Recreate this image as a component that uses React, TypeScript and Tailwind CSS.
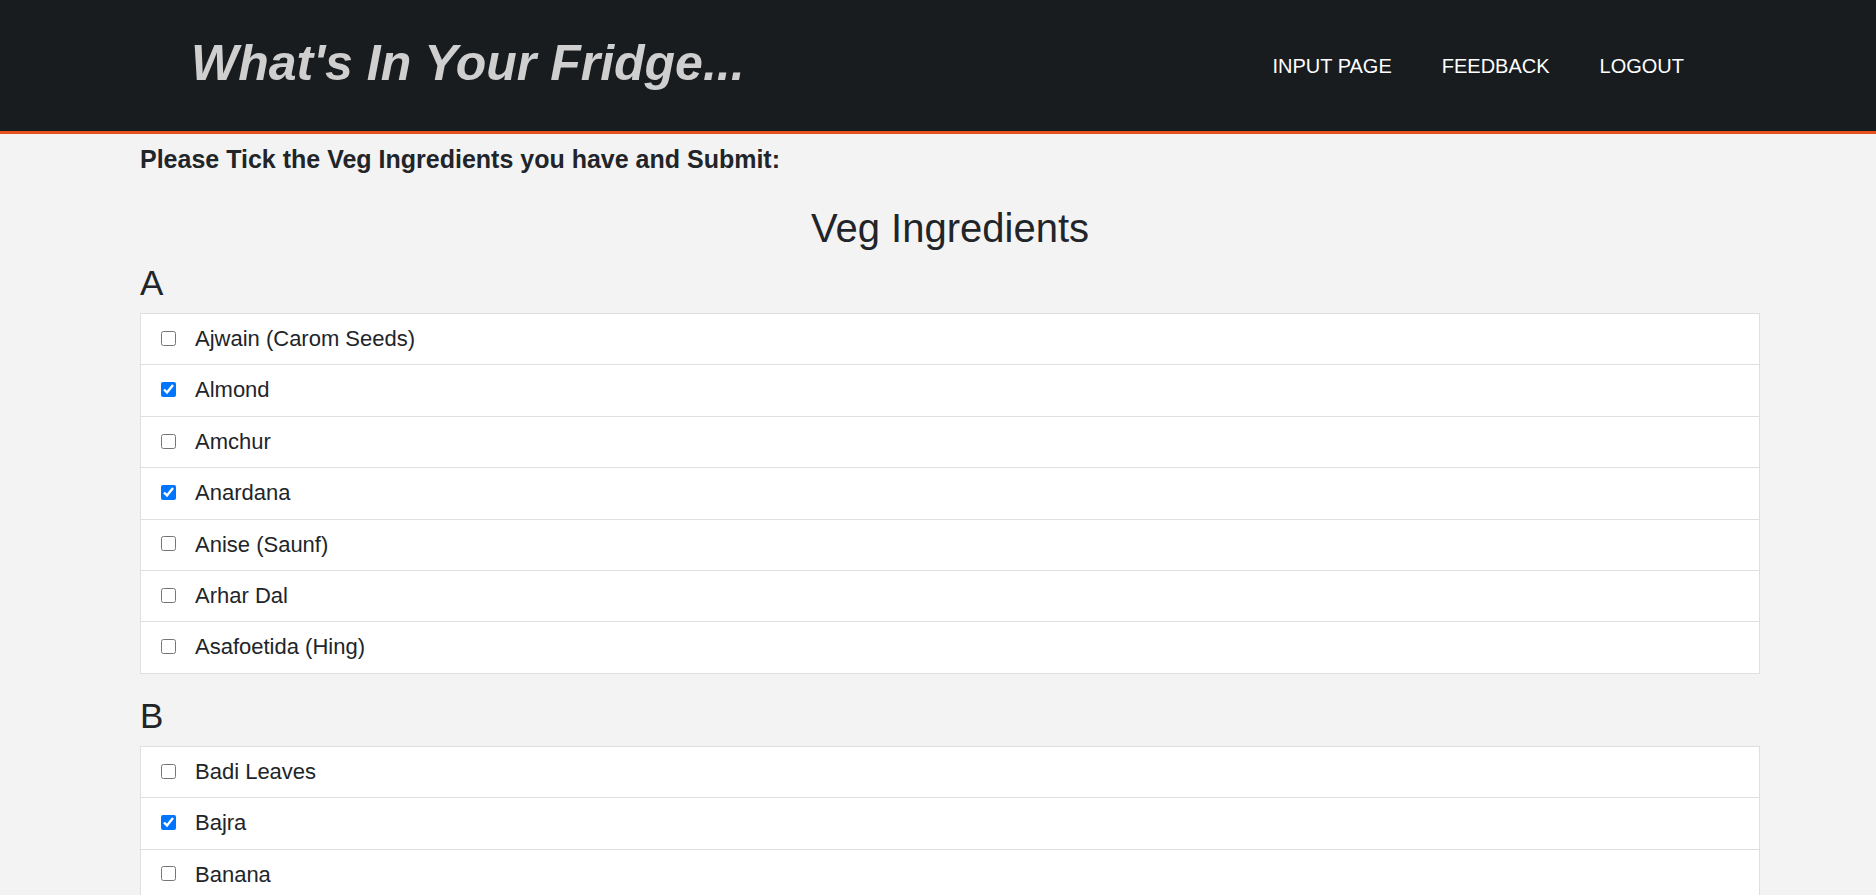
import React from "react";

type Item = { name: string; checked: boolean };

const sections: { letter: string; items: Item[] }[] = [
  {
    letter: "A",
    items: [
      { name: "Ajwain (Carom Seeds)", checked: false },
      { name: "Almond", checked: true },
      { name: "Amchur", checked: false },
      { name: "Anardana", checked: true },
      { name: "Anise (Saunf)", checked: false },
      { name: "Arhar Dal", checked: false },
      { name: "Asafoetida (Hing)", checked: false },
    ],
  },
  {
    letter: "B",
    items: [
      { name: "Badi Leaves", checked: false },
      { name: "Bajra", checked: true },
      { name: "Banana", checked: false },
      { name: "Basmati Rice", checked: false },
      { name: "Bay Leaf", checked: false },
      { name: "Beans", checked: false },
    ],
  },
];

function Row({ item }: { item: Item }) {
  return (
    <label className="flex items-center bg-white border-t border-x border-[#dfdfdf] last:border-b pl-[20px] py-[12px] leading-[26.4px] text-[22px] text-[#212529]">
      <input
        type="checkbox"
        defaultChecked={item.checked}
        className="w-[15px] h-[15px] m-0 mb-[2px] shrink-0"
      />
      <span className="ml-[19px]">{item.name}</span>
    </label>
  );
}

export default function App() {
  return (
    <div
      className="min-h-screen bg-[#f3f3f3]"
      style={{ fontFamily: '"Liberation Sans", Arial, sans-serif' }}
    >
      <header className="h-[134px] bg-[#181c1f] border-b-[3px] border-[#e8501c] flex items-center justify-between pl-[191px] pr-[192px]">
        <h1 className="text-[50px] leading-[60px] font-bold italic text-[#cfcfcf] mb-[6px]">
          What's In Your Fridge...
        </h1>
        <nav className="flex items-center gap-[50px] text-[20px] leading-[24px] text-white">
          <a href="#">INPUT PAGE</a>
          <a href="#">FEEDBACK</a>
          <a href="#">LOGOUT</a>
        </nav>
      </header>

      <main className="pl-[140px] pr-[116px] pt-[10px] pb-[40px] text-[#212529]">
        <h5 className="text-[25px] leading-[30px] font-bold">
          Please Tick the Veg Ingredients you have and Submit:
        </h5>
        <h2 className="mt-[30px] mb-[10px] text-center text-[40px] leading-[48px]">
          Veg Ingredients
        </h2>
        {sections.map((s) => (
          <section key={s.letter} className="mb-[21px]">
            <h3 className="text-[35px] leading-[42px] mb-[9px]">{s.letter}</h3>
            <div className="flex flex-col">
              {s.items.map((it) => (
                <Row key={it.name} item={it} />
              ))}
            </div>
          </section>
        ))}
      </main>
    </div>
  );
}
